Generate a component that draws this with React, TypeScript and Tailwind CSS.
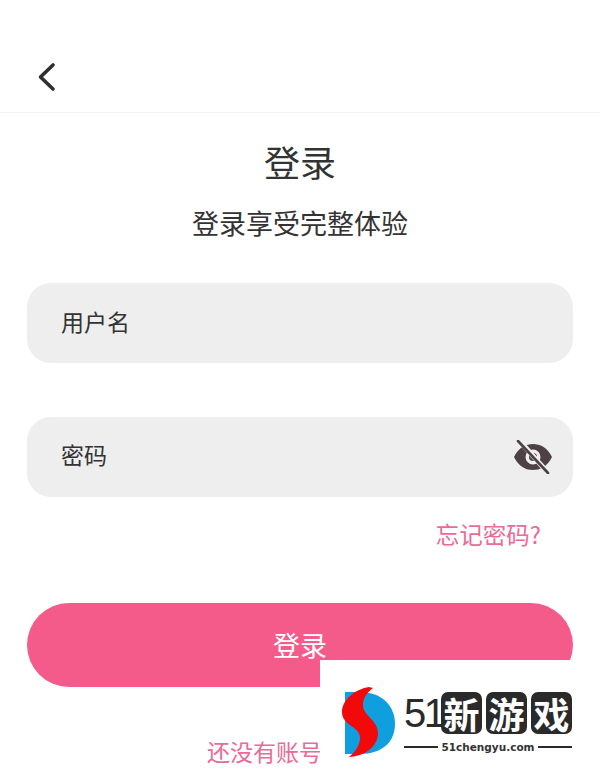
const cjk = "font-['Noto_Sans_CJK_SC','Noto_Sans',sans-serif]";

function BackArrow() {
  return (
    <svg width="20" height="30" viewBox="0 0 20 30" fill="none" className="text-[#2e2e33]">
      <path d="M16 3 L3.5 15 L16 27" stroke="currentColor" strokeWidth="3.6" strokeLinecap="round" strokeLinejoin="round" />
    </svg>
  );
}

function EyeOff() {
  return (
    <svg width="38" height="34" viewBox="0 0 38 34">
      <path
        fillRule="evenodd"
        fill="#4d4145"
        d="M0 17 C5 7 12 4 19 4 C26 4 33 7 38 17 C33 27 26 30 19 30 C12 30 5 27 0 17 Z M19 9.5 A7.5 7.5 0 1 0 19 24.5 A7.5 7.5 0 1 0 19 9.5 Z"
      />
      <circle cx="19" cy="17" r="4" fill="#4d4145" />
      <path d="M5 0 L34 33" stroke="#eeeeee" strokeWidth="5" />
      <path d="M4 1 L34 33" stroke="#4d4145" strokeWidth="2.6" strokeLinecap="round" />
    </svg>
  );
}

function BrandMark() {
  return (
    <svg width="54" height="72" viewBox="0 0 54 72">
      <path d="M3 6 H18 C40 6 53 20 53 38 C53 56 40 68 18 68 H3 Z" fill="#0f9fdf" />
      <path
        d="M27 1 C14 3 0 13 0 26 C0 40 18 40 18 52 C18 60 12 67 7 71 C24 70 36 60 36 47 C36 34 21 30 21 19 C21 11 26 6 31 2 Z"
        fill="#f20a0a"
      />
    </svg>
  );
}

function Watermark() {
  return (
    <div className="absolute right-0 bottom-0 flex h-[120px] w-[280px] items-center bg-white pt-[4px] pl-[22px]">
      <BrandMark />
      <div className="ml-[8px] flex w-[168px] flex-col">
        <div className="flex items-center">
          <span className="w-[37px] font-['Liberation_Sans',sans-serif] text-[40px] leading-[44px] tracking-[-2.5px] text-[#2a2a2a]">51</span>
          {["新", "游", "戏"].map((c) => (
            <span
              key={c}
              className={`${cjk} mr-[4px] flex h-[42px] w-[41px] items-center justify-center rounded-[7px] bg-[#2a2a2a] text-[36px] leading-none font-bold text-white last:mr-0`}
            >
              {c}
            </span>
          ))}
        </div>
        <div className="mt-[5px] flex items-center gap-[3px]">
          <span className="h-[2px] flex-1 bg-[#2a2a2a]" />
          <span className="font-['DejaVu_Sans',sans-serif] text-[10.5px] leading-[14px] font-bold text-[#333]">51chengyu.com</span>
          <span className="h-[2px] flex-1 bg-[#2a2a2a]" />
        </div>
      </div>
    </div>
  );
}

export default function App() {
  return (
    <div className={`${cjk} relative h-[780px] w-[600px] overflow-hidden bg-white`}>
      <header className="flex h-[113px] items-start border-b border-[#f2f2f2] pt-[62px] pl-[37px]">
        <BackArrow />
      </header>

      <h1 className="mt-[24px] text-center text-[36px] leading-[48px] text-[#333]">登录</h1>
      <p className="mt-[19px] text-center text-[27px] leading-[38px] text-[#333]">登录享受完整体验</p>

      <div className="mt-[41px] px-[27px]">
        <div className="flex h-[80px] items-center rounded-[24px] bg-[#eeeeee] pb-[4px] pl-[34px] text-[23px] text-[#333]">用户名</div>

        <div className="mt-[54px] flex h-[80px] items-center justify-between rounded-[24px] bg-[#eeeeee] pr-[21px] pl-[34px] text-[23px] text-[#333]">
          <span className="pb-[5px]">密码</span>
          <EyeOff />
        </div>

        <div className="mt-[20px] pr-[32px] text-right text-[23.5px] leading-[34px] text-[#ea6a98]">忘记密码?</div>

        <button className="mt-[52px] h-[84px] w-full rounded-full bg-[#f45b8b] text-[27px] text-white">登录</button>
      </div>

      <p className="mt-[47px] pl-[207px] text-[23px] leading-[34px] text-[#ea6a98]">还没有账号</p>

      <Watermark />
    </div>
  );
}
